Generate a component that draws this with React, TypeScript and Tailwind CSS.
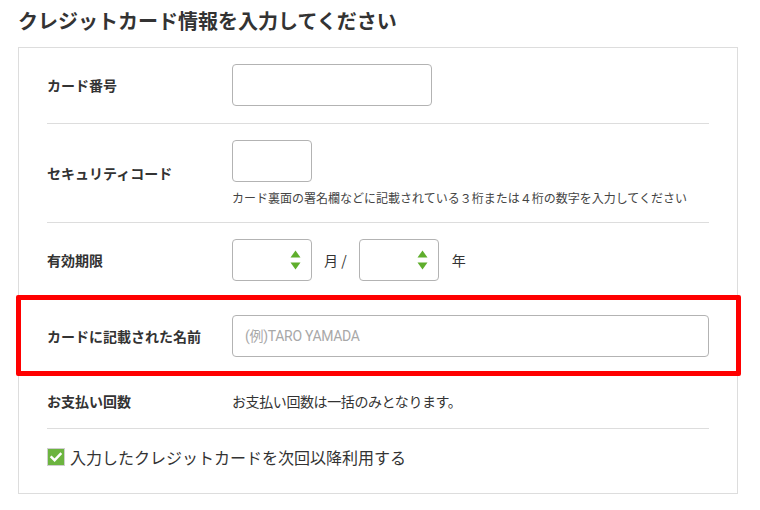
import React from 'react';

const jp = "font-['Noto_Sans_CJK_JP','Noto_Sans',sans-serif]";

const SelectBox = () => (
  <div className="relative w-[80px] h-[42px] border border-[#b3b3b3] rounded-[4px] bg-white">
    <svg
      className="absolute left-[57px] top-[10px]"
      width="11"
      height="21"
      viewBox="0 0 11 21"
    >
      <polygon points="5.5,0.5 10.5,7.5 0.5,7.5" fill="#5fae2c" />
      <polygon points="0.5,12.5 10.5,12.5 5.5,19.5" fill="#5fae2c" />
    </svg>
  </div>
);

const Row = ({
  label,
  children,
  last = false,
  className = '',
}: {
  label: string;
  children: React.ReactNode;
  last?: boolean;
  className?: string;
}) => (
  <div
    className={`relative flex items-center ${last ? '' : 'border-b border-[#dddddd]'} ${className}`}
  >
    <div className="w-[185px] shrink-0 text-[14px] font-bold text-[#333]">{label}</div>
    <div className="flex-1">{children}</div>
  </div>
);

export default function App() {
  return (
    <div className={`w-[760px] h-[510px] bg-white ${jp} text-[#333]`}>
      <h1 className="pl-[18px] pt-[6px] text-[20px] leading-[30px] font-bold">
        クレジットカード情報を入力してください
      </h1>

      <div className="ml-[18px] mt-[11px] w-[720px] border border-[#dddddd] px-[28px]">
        <Row label="カード番号" className="pt-4 pb-[17px]">
          <input className="block w-[200px] h-[42px] border border-[#b3b3b3] rounded-[4px] outline-none" />
        </Row>

        <Row label="セキュリティコード" className="pt-4 pb-[15px]">
          <input className="block w-[80px] h-[42px] border border-[#b3b3b3] rounded-[4px] outline-none" />
          <p className="mt-[7px] text-[12px] leading-[18px] text-[#444]">
            カード裏面の署名欄などに記載されている３桁または４桁の数字を入力してください
          </p>
        </Row>

        <Row label="有効期限" className="pt-4 pb-[17px]">
          <div className="flex items-center text-[14px]">
            <SelectBox />
            <span className="ml-[12px] mr-[12px]">月 /</span>
            <SelectBox />
            <span className="ml-[13px]">年</span>
          </div>
        </Row>

        <Row label="カードに記載された名前" className="pt-4 pb-[17px]">
          <input
            placeholder="(例)TARO YAMADA"
            className="block w-[477px] h-[42px] border border-[#b3b3b3] rounded-[4px] px-[12px] text-[14px] font-['Roboto','Noto_Sans_CJK_JP',sans-serif] tracking-[-0.3px] placeholder:text-[#a8a8a8] outline-none"
          />
          <div className="absolute -left-[31px] -right-[32px] -top-[4px] -bottom-[2px] border-[5px] border-[#ff0000] rounded-[2px] pointer-events-none" />
        </Row>

        <Row label="お支払い回数" className="py-4">
          <p className="text-[14px] leading-[21px] tracking-[-0.4px]">
            お支払い回数は一括のみとなります。
          </p>
        </Row>

        <div className="flex items-center pt-[17px] pb-[25px]">
          <svg width="18" height="18" viewBox="0 0 18 18" className="shrink-0">
            <rect x="0.5" y="0.5" width="17" height="17" fill="#6cb43f" stroke="#cfcfcf" />
            <path
              d="M4.5 9.2 L7.6 12.2 L13.5 6"
              fill="none"
              stroke="#ffffff"
              strokeWidth="2.4"
              strokeLinecap="square"
            />
          </svg>
          <span className="ml-[5px] text-[16px] leading-[22px]">
            入力したクレジットカードを次回以降利用する
          </span>
        </div>
      </div>
    </div>
  );
}
